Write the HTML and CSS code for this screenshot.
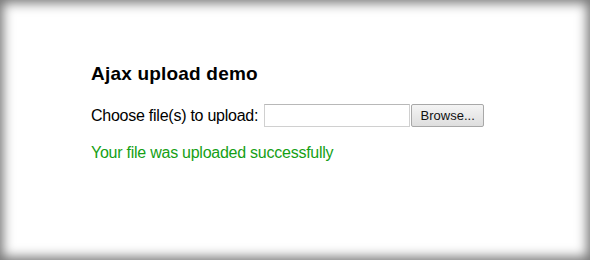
FILE: index.html
```html
<!DOCTYPE html>
<html>
<head>
<meta charset="utf-8">
<link rel="stylesheet" href="styles.css">
</head>
<body>
<div class="frame">
  <div class="content">
    <h1 class="title">Ajax upload demo</h1>
    <div class="row">
      <span class="label">Choose file(s) to upload:</span>
      <span class="file">
        <span class="file-input"></span>
        <span class="browse">Browse...</span>
      </span>
    </div>
    <p class="status">Your file was uploaded successfully</p>
  </div>
</div>
</body>
</html>
```
FILE: styles.css
```css
html, body {
  margin: 0;
  padding: 0;
  background: #fff;
}
.frame {
  width: 590px;
  height: 260px;
  box-sizing: border-box;
  box-shadow: inset 0 0 12px 3px rgba(0,0,0,0.55);
  font-family: "Liberation Sans", Arial, sans-serif;
  color: #000;
}
.content {
  padding: 63px 0 0 91px;
}
.title {
  margin: 0;
  font-size: 19px;
  letter-spacing: 0.2px;
  font-weight: bold;
  line-height: 21px;
}
.row {
  display: flex;
  align-items: center;
  margin-top: 20px;
  height: 23px;
}
.label {
  font-size: 16px;
  letter-spacing: -0.25px;
  margin-right: 6px;
}
.file {
  display: flex;
  height: 23px;
}
.file-input {
  width: 144px;
  height: 21px;
  border: 1px solid #d0d0d0;
  border-top-color: #b8b8b8;
  background: #fff;
}
.browse {
  width: 71px;
  height: 21px;
  border: 1px solid #a8a8a8;
  border-radius: 2px;
  margin-left: 1px;
  background: linear-gradient(#f4f4f4, #dedede);
  font-size: 13px;
  line-height: 21px;
  text-align: center;
  color: #111;
}
.status {
  margin: 17px 0 0 0;
  font-size: 16px;
  line-height: 18px;
  letter-spacing: -0.25px;
  color: #15a015;
}
```
